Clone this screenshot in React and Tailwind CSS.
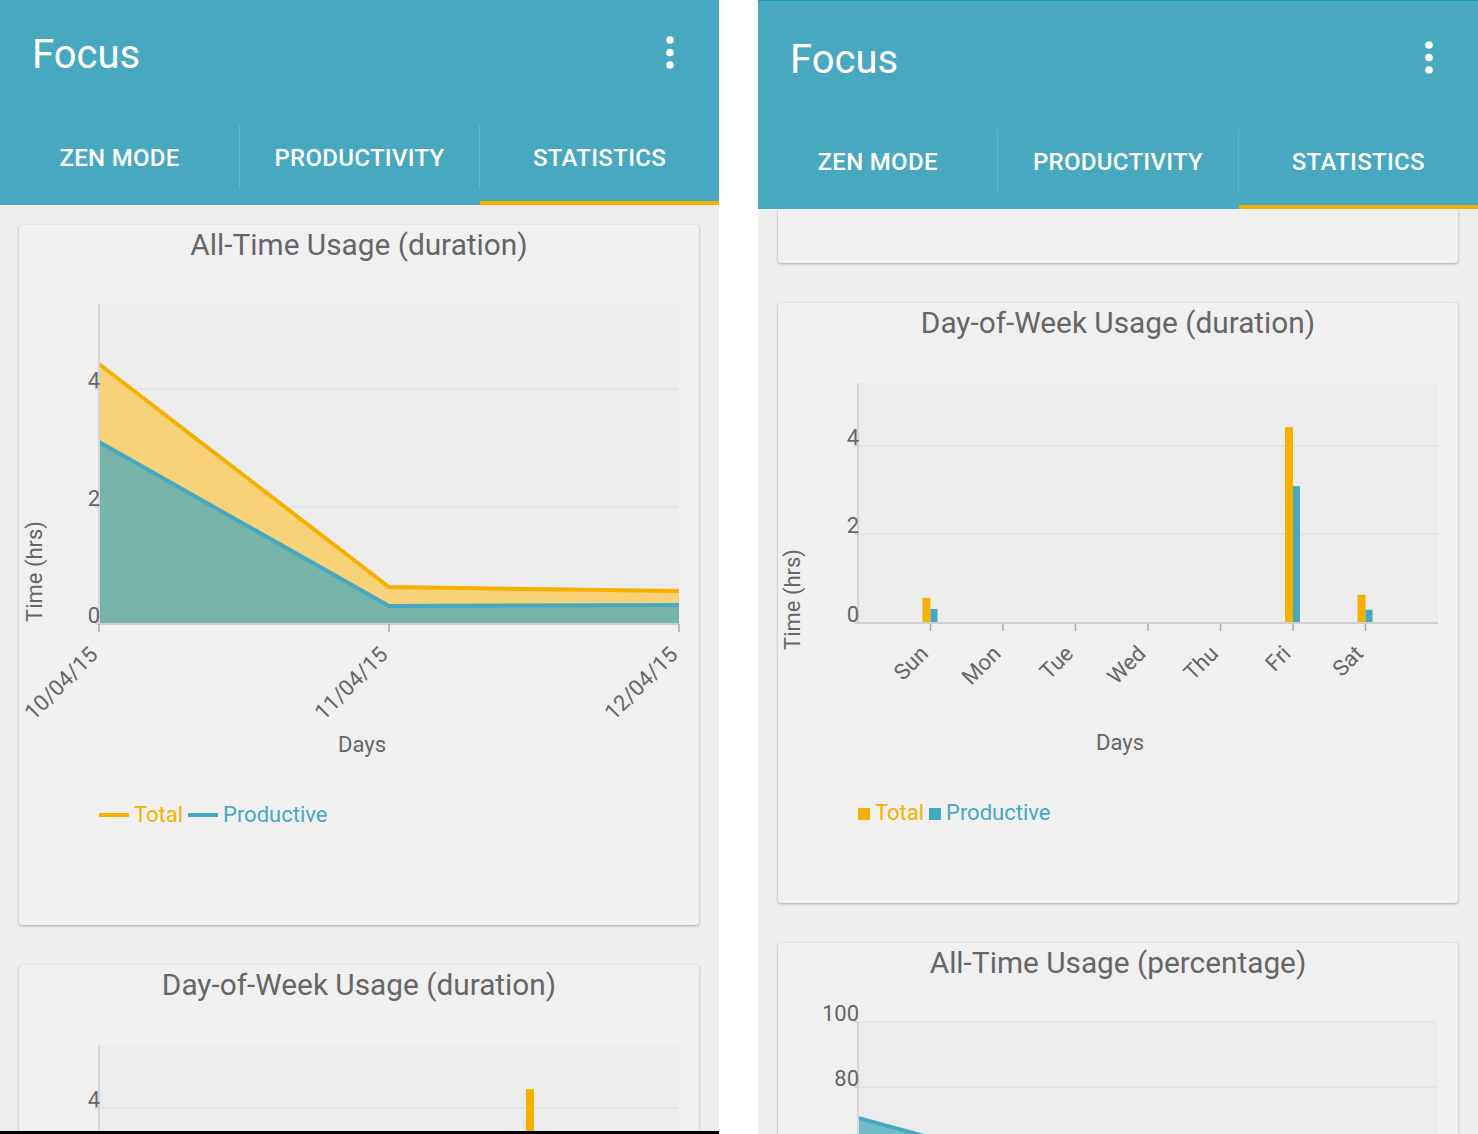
import React from "react";

const YELLOW = "#f5b000";
const TEAL = "#46a9c0";
const GRAY = "#666666";

function Dots() {
  return (
    <svg width="10" height="36" viewBox="0 0 10 36" className="-mt-[5px]">
      <circle cx="5" cy="5" r="3.8" fill="#fff" />
      <circle cx="5" cy="17.5" r="3.8" fill="#fff" />
      <circle cx="5" cy="30" r="3.8" fill="#fff" />
    </svg>
  );
}

function Header({ right }) {
  const tabs = ["ZEN MODE", "PRODUCTIVITY", "STATISTICS"];
  return (
    <div className="bg-[#48a8bf] text-white shrink-0">
      {right && <div className="h-px bg-[#1b98c0]" />}
      <div
        className={`flex items-center justify-between pl-[32px] pr-[44px] ${
          right ? "h-[114px] pt-[4px]" : "h-[110px]"
        }`}
      >
        <span className="text-[40px] leading-none">Focus</span>
        <Dots />
      </div>
      <div className={`flex ${right ? "h-[94px]" : "h-[95px]"}`}>
        {tabs.map((t, i) => (
          <React.Fragment key={t}>
            {i > 0 && <div className="w-px bg-[#5db5ca] mt-[15px] mb-[16px]" />}
            <div
              className={`flex-1 flex items-center justify-center pt-[4px] border-b-4 text-[24px] font-medium tracking-[0.3px] ${
                i === 2 ? "border-[#f5b000]" : "border-transparent"
              }`}
            >
              {t}
            </div>
          </React.Fragment>
        ))}
      </div>
    </div>
  );
}

function Card({ title, className, children }) {
  return (
    <div
      className={`bg-[#f0f0f0] rounded-[3px] shadow-[0_1px_3px_rgba(0,0,0,0.28),0_0_1px_rgba(0,0,0,0.15)] shrink-0 overflow-hidden ${className}`}
    >
      {title && (
        <div className="h-[40px] leading-[40px] text-center text-[29.8px] text-[#666]">
          {title}
        </div>
      )}
      {children}
    </div>
  );
}

function YLabels({ items }) {
  return items.map(([label, y]) => (
    <g key={label}>
      <line x1="76" x2="80" y1={y} y2={y} stroke="#bbb" strokeWidth="1" />
      <text x="81" y={y - 1} textAnchor="end" fontSize="22" fill={GRAY}>
        {label}
      </text>
    </g>
  ));
}

function AllTimeChart() {
  const ticks = [80, 370, 660];
  const dates = ["10/04/15", "11/04/15", "12/04/15"];
  const total = [
    [80, 99],
    [370, 322],
    [660, 326],
  ];
  const prod = [
    [80, 177],
    [370, 341],
    [660, 340],
  ];
  const pts = (a) => a.map((p) => p.join(",")).join(" ");
  return (
    <svg width="680" height="660" className="block">
      <rect x="80" y="39" width="580" height="320" fill="#ececec" />
      <line x1="80" x2="660" y1="124" y2="124" stroke="#e0e0e0" strokeWidth="1.5" />
      <line x1="80" x2="660" y1="242" y2="242" stroke="#e0e0e0" strokeWidth="1.5" />
      <polygon points={`${pts(total)} 660,359 80,359`} fill="#f7d278" />
      <polygon points={`${pts(prod)} 660,359 80,359`} fill="#77b4aa" />
      <polyline points={pts(total)} fill="none" stroke={YELLOW} strokeWidth="4" />
      <polyline points={pts(prod)} fill="none" stroke={TEAL} strokeWidth="4" />
      <line x1="80" x2="80" y1="39" y2="359" stroke="#d6d6d6" strokeWidth="2" />
      <line x1="80" x2="660" y1="359" y2="359" stroke="#cfcfcf" strokeWidth="2" />
      {ticks.map((x) => (
        <line key={x} x1={x} x2={x} y1="359" y2="367" stroke="#aaa" strokeWidth="1.5" />
      ))}
      <YLabels items={[["4", 124], ["2", 242], ["0", 359]]} />
      {ticks.map((x, i) => (
        <text
          key={x}
          x={x}
          y="391"
          textAnchor="end"
          fontSize="22"
          fill={GRAY}
          transform={`rotate(-45 ${x} 391)`}
        >
          {dates[i]}
        </text>
      ))}
      <text x="343" y="487" textAnchor="middle" fontSize="22" fill={GRAY}>
        Days
      </text>
      <text
        x="23"
        y="357"
        fontSize="22"
        fill={GRAY}
        transform="rotate(-90 23 357)"
      >
        Time (hrs)
      </text>
      <line x1="80" x2="110" y1="550" y2="550" stroke={YELLOW} strokeWidth="4" />
      <text x="115" y="557" fontSize="22" fill={YELLOW}>
        Total
      </text>
      <line x1="169" x2="199" y1="550" y2="550" stroke={TEAL} strokeWidth="4" />
      <text x="204" y="557" fontSize="22" fill={TEAL}>
        Productive
      </text>
    </svg>
  );
}

function DayChart() {
  const days = ["Sun", "Mon", "Tue", "Wed", "Thu", "Fri", "Sat"];
  const total = [0.57, 0, 0, 0, 0, 4.45, 0.64];
  const prod = [0.32, 0, 0, 0, 0, 3.11, 0.3];
  const y = (v) => 280 - v * 44;
  return (
    <svg width="680" height="560" className="block">
      <rect x="80" y="40" width="580" height="240" fill="#ececec" />
      <line x1="80" x2="660" y1="103" y2="103" stroke="#e0e0e0" strokeWidth="1.5" />
      <line x1="80" x2="660" y1="191" y2="191" stroke="#e0e0e0" strokeWidth="1.5" />
      {days.map((d, i) => {
        const x = 80 + 72.5 * (i + 1);
        return (
          <g key={d}>
            {total[i] > 0 && (
              <rect x={x - 8} y={y(total[i])} width="8" height={280 - y(total[i])} fill={YELLOW} />
            )}
            {prod[i] > 0 && (
              <rect x={x} y={y(prod[i])} width="7" height={280 - y(prod[i])} fill={TEAL} />
            )}
            <line x1={x} x2={x} y1="280" y2="288" stroke="#aaa" strokeWidth="1.5" />
            <text
              x={x - 1}
              y="312"
              textAnchor="end"
              fontSize="22"
              fill={GRAY}
              transform={`rotate(-45 ${x - 1} 312)`}
            >
              {d}
            </text>
          </g>
        );
      })}
      <line x1="80" x2="80" y1="40" y2="280" stroke="#d6d6d6" strokeWidth="2" />
      <line x1="80" x2="660" y1="280" y2="280" stroke="#cfcfcf" strokeWidth="2" />
      <YLabels items={[["4", 103], ["2", 191], ["0", 280]]} />
      <text x="342" y="407" textAnchor="middle" fontSize="22" fill={GRAY}>
        Days
      </text>
      <text x="22" y="307" fontSize="22" fill={GRAY} transform="rotate(-90 22 307)">
        Time (hrs)
      </text>
      <rect x="80" y="465" width="12" height="12" fill={YELLOW} />
      <text x="97" y="477" fontSize="22" fill={YELLOW}>
        Total
      </text>
      <rect x="151" y="465" width="12" height="12" fill={TEAL} />
      <text x="168" y="477" fontSize="22" fill={TEAL}>
        Productive
      </text>
    </svg>
  );
}

function PercentChart() {
  const y = (v) => 39 + (100 - v) * 3.25;
  const prod = [
    [80, y(70.5)],
    [370, y(46)],
    [660, y(52)],
  ];
  const pts = prod.map((p) => p.join(",")).join(" ");
  return (
    <svg width="680" height="560" className="block">
      <rect x="80" y="39" width="580" height="325" fill="#ececec" />
      {[80, 60, 40, 20].map((v) => (
        <line key={v} x1="80" x2="660" y1={y(v)} y2={y(v)} stroke="#e0e0e0" strokeWidth="1.5" />
      ))}
      <line x1="80" x2="660" y1="39" y2="39" stroke="#e6e6e6" strokeWidth="1.5" />
      <polygon points={`${pts} 660,364 80,364`} fill="#72bcc8" />
      <polyline points={pts} fill="none" stroke={TEAL} strokeWidth="4" />
      <line x1="80" x2="80" y1="39" y2="364" stroke="#d6d6d6" strokeWidth="2" />
      <YLabels
        items={[
          ["100", y(100)],
          ["80", y(80)],
          ["60", y(60)],
          ["40", y(40)],
          ["20", y(20)],
          ["0", y(0)],
        ]}
      />
    </svg>
  );
}

export default function App() {
  return (
    <div className="flex w-[1478px] h-[1134px] bg-white overflow-hidden font-[Roboto,sans-serif]">
      {/* left phone */}
      <div className="w-[719px] flex flex-col shrink-0">
        <Header />
        <div className="flex-1 overflow-hidden bg-[#eeeeee] pl-[19px] pr-[20px] pt-[20px] flex flex-col gap-[40px]">
          <Card title="All-Time Usage (duration)" className="h-[700px]">
            <AllTimeChart />
          </Card>
          <Card title="Day-of-Week Usage (duration)" className="h-[600px]">
            <DayChart />
          </Card>
        </div>
        <div className="h-[3px] bg-black shrink-0" />
      </div>

      <div className="w-[39px] shrink-0" />

      {/* right phone */}
      <div className="w-[720px] flex flex-col shrink-0">
        <Header right />
        <div className="flex-1 overflow-hidden bg-[#eeeeee] px-[20px] flex flex-col gap-[40px]">
          <Card className="h-[54px] rounded-t-none" />
          <Card title="Day-of-Week Usage (duration)" className="h-[600px]">
            <DayChart />
          </Card>
          <Card title="All-Time Usage (percentage)" className="h-[600px]">
            <PercentChart />
          </Card>
        </div>
      </div>
    </div>
  );
}
